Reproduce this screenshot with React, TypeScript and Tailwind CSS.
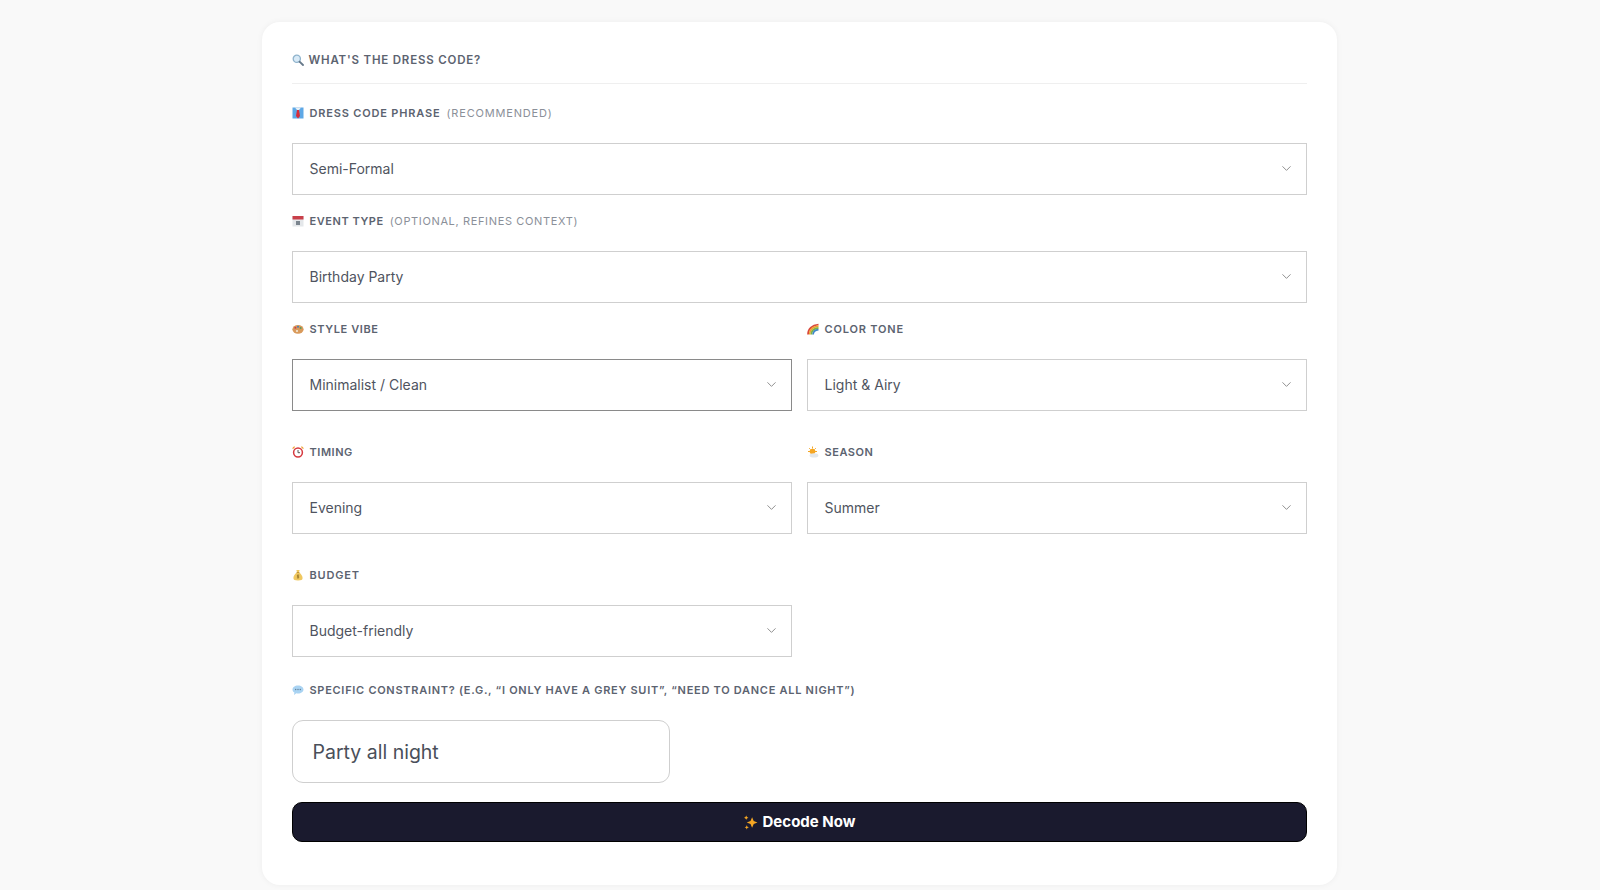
import { ChevronDown } from "lucide-react";
import type { ReactNode } from "react";

const SearchIcon = () => (
  <svg viewBox="0 0 12 12" className="w-[12px] h-[12px] shrink-0">
    <circle cx="4.8" cy="4.8" r="3.6" fill="#d8eaf7" stroke="#8fb3cc" strokeWidth="1.3" />
    <path d="M7.600 7.600L11 11" stroke="#66798a" strokeWidth="1.800" strokeLinecap="round" />
  </svg>
);

const TieIcon = () => (
  <svg viewBox="0 0 12 12" className="w-[12px] h-[12px] shrink-0">
    <rect width="11" height="11" x="0.500" y="0.500" fill="#5ea8e6" />
    <path d="M3 .500h6L7 3H5z" fill="#e8eef3" />
    <path d="M5 3h2l1 6-2 2.500L4 9z" fill="#d92d3a" />
  </svg>
);

const CalendarIcon = () => (
  <svg viewBox="0 0 12 12" className="w-[12px] h-[12px] shrink-0">
    <rect x="0.500" y="1" width="11" height="10.500" fill="#e4e7ea" />
    <rect x="0.500" y="1" width="11" height="3.500" fill="#c9404a" />
    <rect x="4" y="6" width="4" height="4" fill="#7b858e" />
  </svg>
);

const PaletteIcon = () => (
  <svg viewBox="0 0 12 12" className="w-[12px] h-[12px] shrink-0">
    <ellipse cx="6" cy="6.300" rx="5.600" ry="4.400" fill="#d99a5b" />
    <circle cx="3.400" cy="4.800" r="1" fill="#c9404a" />
    <circle cx="6" cy="3.800" r="1" fill="#4a7fb5" />
    <circle cx="8.600" cy="5" r="1" fill="#5b9b5b" />
    <circle cx="5" cy="8" r="1.100" fill="#f4ead9" />
  </svg>
);

const RainbowIcon = () => (
  <svg viewBox="0 0 12 12" className="w-[12px] h-[12px] shrink-0" fill="none">
    <path d="M1 11.500C1 6 5 2 11.500 1.500" stroke="#d9483b" strokeWidth="1.700" />
    <path d="M2.700 11.500C2.700 7 6 3.800 11.500 3.200" stroke="#f0a030" strokeWidth="1.700" />
    <path d="M4.400 11.500C4.400 8 7 5.400 11.500 4.900" stroke="#7cb342" strokeWidth="1.700" />
    <path d="M6.100 11.500C6.100 9 8 7 11.500 6.600" stroke="#3f87c7" strokeWidth="1.700" />
  </svg>
);

const ClockIcon = () => (
  <svg viewBox="0 0 12 12" className="w-[12px] h-[12px] shrink-0" fill="none">
    <path d="M.600 2.600L2.600.600M11.400 2.600L9.400.600" stroke="#f0a030" strokeWidth="1.300" />
    <circle cx="6" cy="6.500" r="4.400" fill="#fff" stroke="#d6393f" strokeWidth="1.500" />
    <path d="M6 4v2.700h2" stroke="#555" strokeWidth="1" />
  </svg>
);

const SunIcon = () => (
  <svg viewBox="0 0 12 12" className="w-[12px] h-[12px] shrink-0" fill="none">
    <path d="M5.500 .500v2M1 5.500h2M2.200 2.200l1.400 1.400M8.800 2.200L7.400 3.600M10 5.500H8" stroke="#f5a623" strokeWidth="1" />
    <circle cx="5.500" cy="5.500" r="2.800" fill="#f5a623" />
    <ellipse cx="7" cy="9.400" rx="4.400" ry="2.100" fill="#e3e7ea" />
  </svg>
);

const MoneyIcon = () => (
  <svg viewBox="0 0 12 12" className="w-[12px] h-[12px] shrink-0">
    <path d="M4.400 1h3.200L7 3.400c2 1 3.600 3.600 3.600 5.600 0 1.800-1.400 2.500-4.600 2.500S1.400 10.800 1.400 9c0-2 1.600-4.600 3.600-5.600z" fill="#f0c860" />
    <rect x="4.600" y="3" width="2.800" height="0.800" fill="#b98a2c" />
    <path d="M7.200 6.200H5.400v1.300h1.300v1.300H4.900M6 5.500v4" stroke="#8a6a20" strokeWidth="0.600" fill="none" />
  </svg>
);

const BubbleIcon = () => (
  <svg viewBox="0 0 12 12" className="w-[12px] h-[12px] shrink-0">
    <path d="M6 1.500c3.200 0 5.500 1.800 5.500 4S9.200 9.500 6 9.500c-.6 0-1.200 0-1.700-.2L2 11l.4-2.500C1.100 7.800.5 6.700.5 5.500c0-2.200 2.300-4 5.500-4z" fill="#a9d3f2" />
    <circle cx="3.700" cy="5.500" r="0.700" fill="#5f7d96" />
    <circle cx="6" cy="5.500" r="0.700" fill="#5f7d96" />
    <circle cx="8.300" cy="5.500" r="0.700" fill="#5f7d96" />
  </svg>
);

const SparkleIcon = () => (
  <svg viewBox="0 0 14 14" className="w-[15px] h-[15px] shrink-0" fill="#f5a623">
    <path d="M8.500 2l1.500 3.500L13.500 7 10 8.500 8.500 12 7 8.500 3.500 7 7 5.500z" />
    <path d="M3 .500l.7 1.300 1.300.7-1.300.7L3 4.500l-.7-1.300L1 2.500l1.300-.7z" />
    <path d="M3.500 9.500l.6 1.400 1.400.6-1.400.6-.6 1.400-.6-1.400-1.400-.6 1.400-.6z" />
  </svg>
);

function Field({
  icon,
  label,
  hint,
  value,
  focused,
  labelClass = "tracking-[0.075em]",
  hintClass = "tracking-[0.075em]",
}: {
  icon: ReactNode;
  label: string;
  hint?: string;
  value: string;
  focused?: boolean;
  labelClass?: string;
  hintClass?: string;
}) {
  return (
    <div>
      <div className="h-[20px] pb-[2px] mb-[19px] flex items-center gap-[6px] text-[11px] font-semibold text-[#5c6370] uppercase">
        {icon}
        <span className={labelClass}>{label}</span>
        {hint && <span className={`font-normal text-[#8b9099] ${hintClass}`}>{hint}</span>}
      </div>
      <div
        className={`h-[52px] flex items-center justify-between pl-[17px] pr-[12px] pb-[1px] bg-white border ${
          focused ? "border-[#8a8a8a]" : "border-[#cfcfcf]"
        }`}
      >
        <span className="text-[14px] text-[#4f5460]">{value}</span>
        <ChevronDown size={15} strokeWidth={1.4} className="text-[#808080]" />
      </div>
    </div>
  );
}

export default function App() {
  return (
    <div className="min-h-[890px] bg-[#f9f9f9] flex justify-center pt-[22px] pr-[2px] font-['Inter','Liberation_Sans',sans-serif]">
      <div className="w-[1075px] h-[863px] bg-white rounded-[18px] shadow-[0_0_6px_rgba(0,0,0,0.05)] px-[30px] pt-[28px]">
        <div className="h-[34px] border-b border-[#efefef] flex items-start gap-[5px] text-[11.5px] font-semibold tracking-[0.07em] text-[#5c6370] uppercase">
          <span className="h-[20px] flex items-center"><SearchIcon /></span>
          <span className="leading-[20px]">What's the dress code?</span>
        </div>

        <div className="pt-[20px] flex flex-col gap-[17px]">
          <Field icon={<TieIcon />} label="Dress code phrase" hint="(Recommended)" value="Semi-Formal" />
          <Field
            icon={<CalendarIcon />}
            label="Event type"
            hint="(Optional, refines context)"
            value="Birthday Party"
            labelClass="tracking-[0.05em]"
            hintClass="tracking-[0.058em]"
          />

          <div className="grid grid-cols-2 gap-x-[15px] gap-y-[32px]">
            <Field icon={<PaletteIcon />} label="Style vibe" value="Minimalist / Clean" focused labelClass="tracking-[0.055em]" />
            <Field icon={<RainbowIcon />} label="Color tone" value="Light & Airy" />
            <Field icon={<ClockIcon />} label="Timing" value="Evening" labelClass="tracking-[0.05em]" />
            <Field icon={<SunIcon />} label="Season" value="Summer" labelClass="tracking-[0.05em]" />
            <Field icon={<MoneyIcon />} label="Budget" value="Budget-friendly" />
          </div>
        </div>

        <div className="mt-[23px]">
          <div className="h-[20px] mb-[20px] flex items-center gap-[6px] text-[11px] font-semibold tracking-[0.065em] text-[#5c6370] uppercase">
            <BubbleIcon />
            <span>Specific constraint? (e.g., “I only have a grey suit”, “Need to dance all night”)</span>
          </div>
          <div className="w-[378px] h-[63px] flex items-center px-[20px] pt-[3px] border border-[#cfcfcf] rounded-[11px] text-[19.500px] text-[#4a4f5a]">
            Party all night
          </div>
        </div>

        <button className="mt-[19px] w-full h-[40px] flex items-center justify-center gap-[5px] pt-[1px] rounded-[10px] border border-black bg-[#1a1a2e] text-white text-[15px] font-bold">
          <SparkleIcon />
          Decode Now
        </button>
      </div>
    </div>
  );
}
